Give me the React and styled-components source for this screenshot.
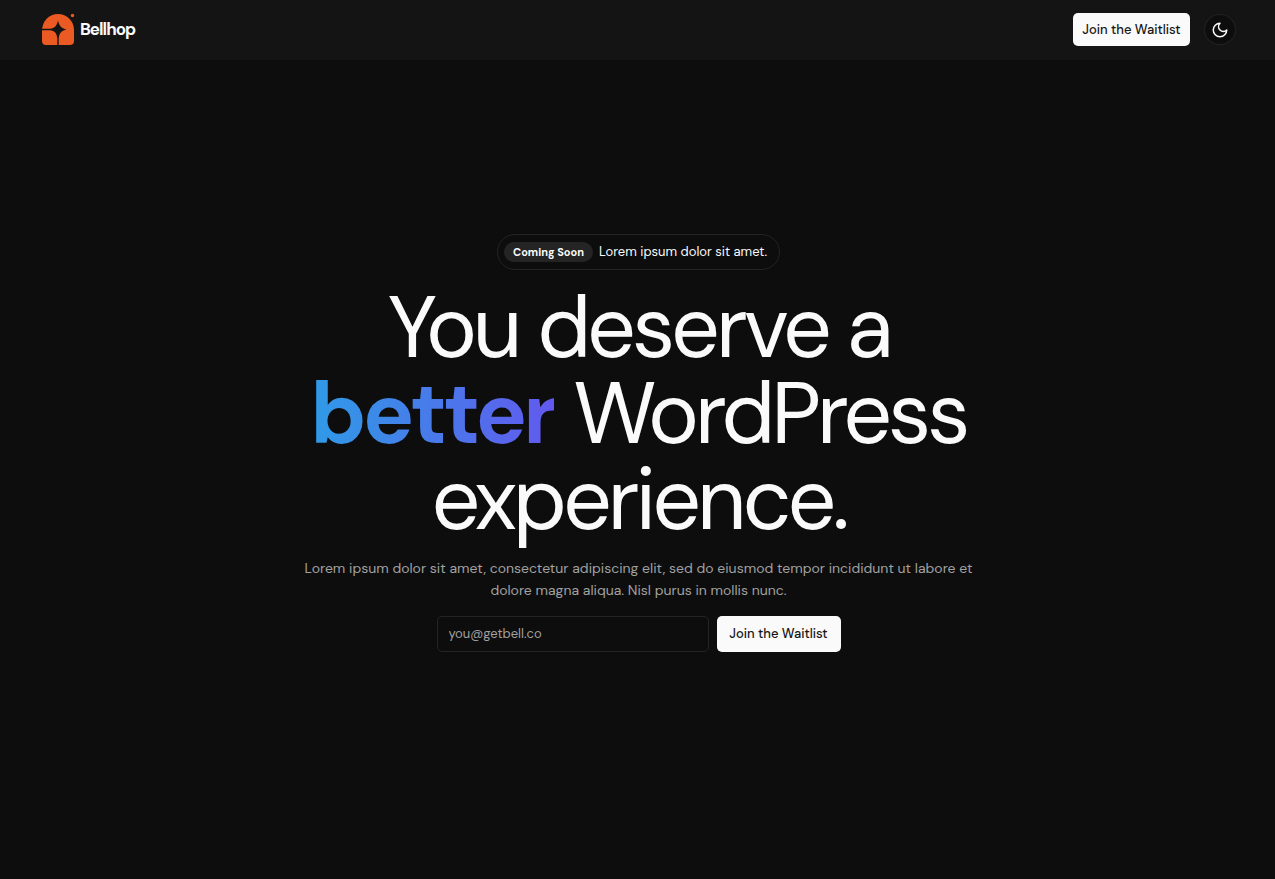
import React from "react";
import styled, { createGlobalStyle } from "styled-components";

const GlobalStyle = createGlobalStyle`
  *, *::before, *::after { box-sizing: border-box; }
  body {
    margin: 0;
    background: #0d0d0d;
    color: #fafafa;
    font-family: "DM Sans", Inter, "Liberation Sans", sans-serif;
    font-optical-sizing: none;
    -webkit-font-smoothing: antialiased;
  }
  button, input { font: inherit; font-optical-sizing: none; }
`;

const Page = styled.div`
  display: flex;
  flex-direction: column;
  min-height: 100vh;
`;

const Header = styled.header`
  display: flex;
  align-items: center;
  justify-content: space-between;
  height: 60px;
  padding: 0 39px 1px 40px;
  background: #141414;
`;

const Brand = styled.a`
  display: flex;
  align-items: center;
  gap: 3px;
  color: #fafafa;
  font-size: 17px;
  font-weight: 700;
  line-height: 24px;
  letter-spacing: -1px;
  text-decoration: none;
`;

const BrandName = styled.span`
  padding-bottom: 2px;
`;

const Actions = styled.div`
  display: flex;
  align-items: center;
  gap: 14px;
`;

const Button = styled.button`
  height: ${(p) => (p.$large ? 36 : 33)}px;
  width: ${(p) => (p.$large ? 124 : 117)}px;
  padding: 0;
  border: 0;
  border-radius: 5px;
  background: #fafafa;
  color: #171717;
  font-size: 13px;
  font-weight: 500;
  white-space: nowrap;
  cursor: pointer;
`;

const ThemeToggle = styled.button`
  display: grid;
  place-items: center;
  width: 32px;
  height: 31px;
  padding: 0;
  border: 1px solid #222222;
  border-radius: 50%;
  background: #0d0d0d;
  color: #fafafa;
  cursor: pointer;
`;

const Hero = styled.main`
  display: flex;
  flex: 1;
  flex-direction: column;
  align-items: center;
  justify-content: center;
  padding: 0 20px 54px 22px;
  text-align: center;
`;

const Announcement = styled.div`
  display: flex;
  align-items: center;
  gap: 6px;
  height: 36px;
  padding: 0 12px 0 6px;
  border: 1px solid #242424;
  border-radius: 18px;
  font-size: 13px;
  line-height: 20px;
`;

const Tag = styled.span`
  padding: 0 9px;
  border-radius: 10px;
  background: #242424;
  font-size: 11px;
  font-weight: 700;
`;

const Title = styled.h1`
  margin: 15px 0 0;
  font-size: 86px;
  font-weight: 450;
  line-height: 86px;
  letter-spacing: -4px;
`;

const TitleLine = styled.span`
  display: block;
`;

const Highlight = styled.span`
  background: linear-gradient(to right, #2f9be6, #6259ee);
  background-clip: text;
  color: transparent;
  font-weight: 700;
`;

const Lead = styled.p`
  max-width: 700px;
  margin: 14px 0 0;
  color: #a1a1a1;
  font-size: 14px;
  line-height: 22px;
`;

const Signup = styled.form`
  display: flex;
  gap: 8px;
  margin-top: 15px;
`;

const EmailInput = styled.input`
  width: 272px;
  height: 36px;
  padding: 0 11px;
  border: 1px solid #242424;
  border-radius: 5px;
  background: transparent;
  color: #fafafa;
  font-size: 13px;
  outline: none;

  &::placeholder { color: #a1a1a1; opacity: 1; }
  &:focus { border-color: #6259ee; }
`;

function Logo() {
  return (
    <svg width="37" height="36" viewBox="0 0 37 36" aria-hidden="true">
      <path
        d="M2 19C2 9 9 2 18 2S34 9 34 18V29C34 32 32 33 30 33H6C3 33 2 31 2 29Z"
        fill="#ea5a22"
      />
      <path
        d="M18 8.500C19.300 14 21 16 26.500 17.500C21 19 19.500 21 18.700 26V33H17.300V26C16.500 21 15 19 10 18.200H2V16.800H10C15 16 16.700 14 18 8.500Z"
        fill="#141414"
      />
      <circle cx="32.500" cy="3.500" r="1.700" fill="#ea5a22" />
    </svg>
  );
}

function Moon() {
  return (
    <svg
      width="18"
      height="18"
      viewBox="0 0 24 24"
      fill="none"
      stroke="currentColor"
      strokeWidth="2"
      strokeLinecap="round"
      strokeLinejoin="round"
      aria-hidden="true"
    >
      <path d="M12 3a6 6 0 0 0 9 9 9 9 0 1 1-9-9Z" />
    </svg>
  );
}

export default function App() {
  return (
    <>
      <GlobalStyle />
      <Page>
        <Header>
          <Brand href="#">
            <Logo />
            <BrandName>Bellhop</BrandName>
          </Brand>
          <Actions>
            <Button type="button">Join the Waitlist</Button>
            <ThemeToggle type="button" aria-label="Toggle theme">
              <Moon />
            </ThemeToggle>
          </Actions>
        </Header>
        <Hero>
          <Announcement>
            <Tag>Coming Soon</Tag>
            Lorem ipsum dolor sit amet.
          </Announcement>
          <Title>
            <TitleLine>You deserve a</TitleLine>
            <TitleLine>
              <Highlight>better</Highlight> WordPress
            </TitleLine>
            <TitleLine>experience.</TitleLine>
          </Title>
          <Lead>
            Lorem ipsum dolor sit amet, consectetur adipiscing elit, sed do eiusmod tempor
            incididunt ut labore et dolore magna aliqua. Nisl purus in mollis nunc.
          </Lead>
          <Signup onSubmit={(e) => e.preventDefault()}>
            <EmailInput type="email" placeholder="you@getbell.co" aria-label="Email address" />
            <Button type="submit" $large>
              Join the Waitlist
            </Button>
          </Signup>
        </Hero>
      </Page>
    </>
  );
}
